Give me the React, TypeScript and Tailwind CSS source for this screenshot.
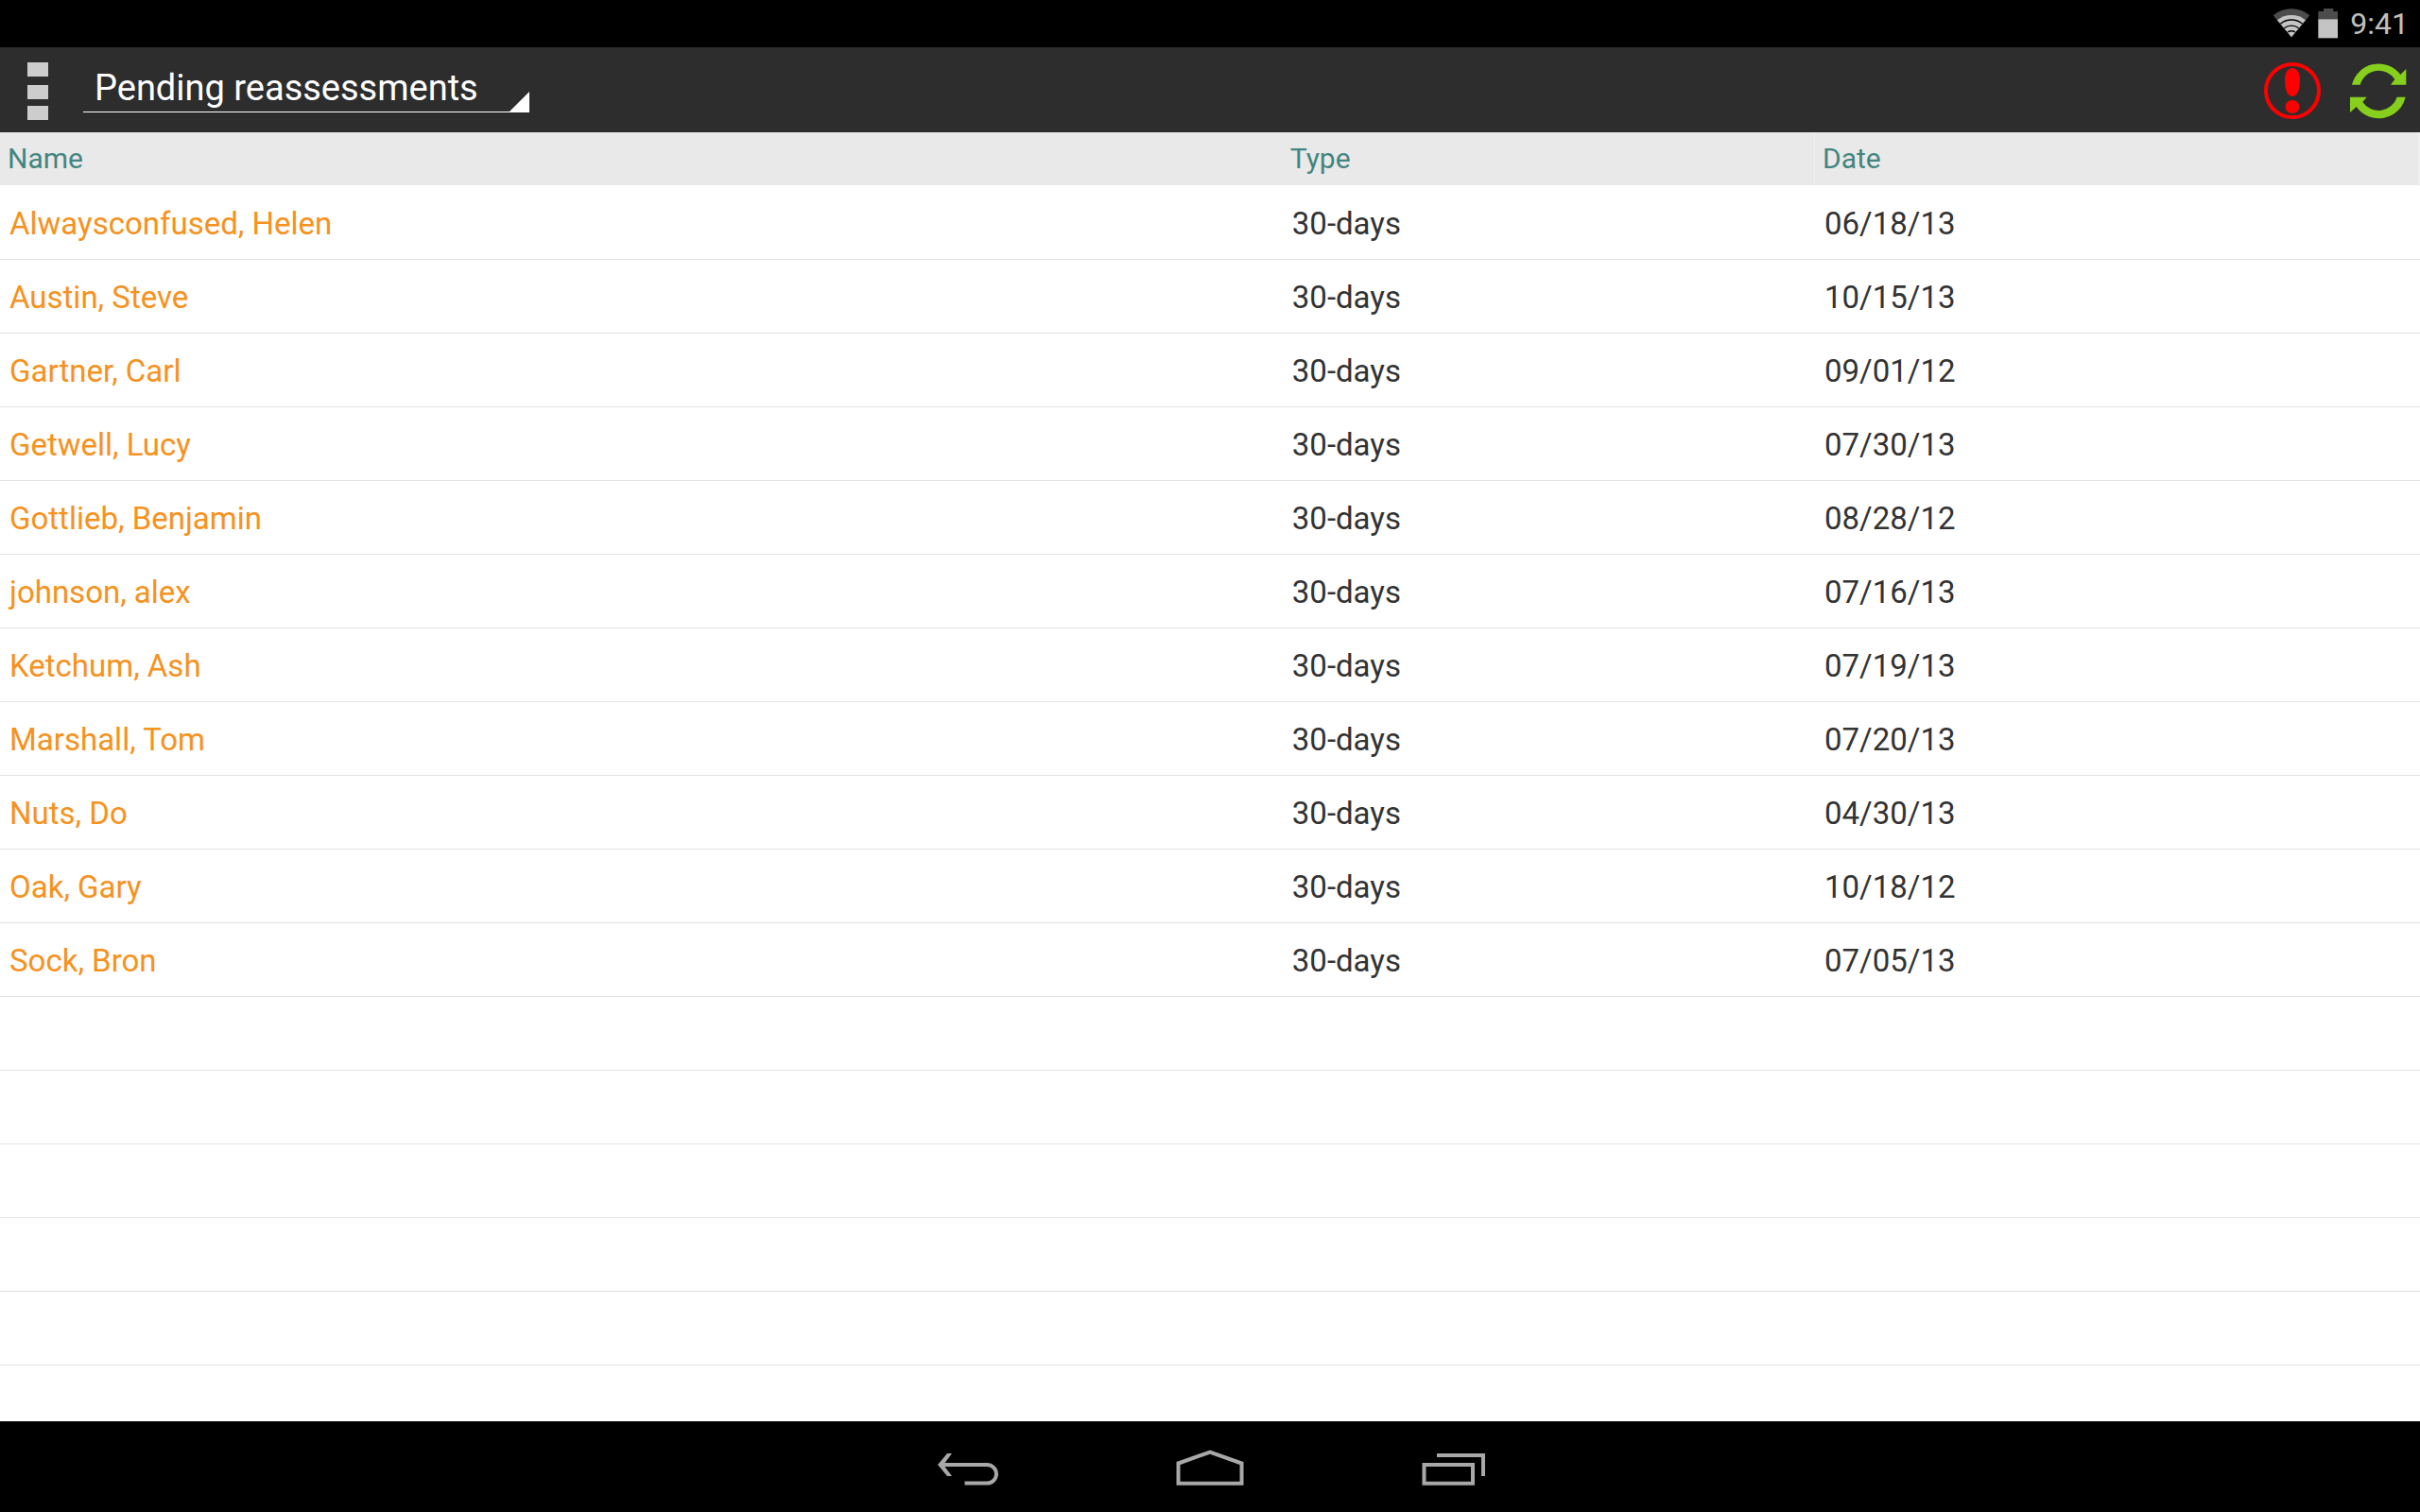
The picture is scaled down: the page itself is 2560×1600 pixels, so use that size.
import type { ReactNode } from 'react';

const reassessments = [
  { name: 'Alwaysconfused, Helen', type: '30-days', date: '06/18/13' },
  { name: 'Austin, Steve', type: '30-days', date: '10/15/13' },
  { name: 'Gartner, Carl', type: '30-days', date: '09/01/12' },
  { name: 'Getwell, Lucy', type: '30-days', date: '07/30/13' },
  { name: 'Gottlieb, Benjamin', type: '30-days', date: '08/28/12' },
  { name: 'johnson, alex', type: '30-days', date: '07/16/13' },
  { name: 'Ketchum, Ash', type: '30-days', date: '07/19/13' },
  { name: 'Marshall, Tom', type: '30-days', date: '07/20/13' },
  { name: 'Nuts, Do', type: '30-days', date: '04/30/13' },
  { name: 'Oak, Gary', type: '30-days', date: '10/18/12' },
  { name: 'Sock, Bron', type: '30-days', date: '07/05/13' },
];

// blank ruled rows that fill the rest of the list
const EMPTY_ROWS = 5;

export default function App() {
  return (
    <div className="flex h-screen flex-col overflow-hidden bg-white font-[Roboto,sans-serif]">
      <StatusBar />
      <ActionBar />
      <main className="min-h-0 flex-1 overflow-hidden">
        <ReassessmentTable />
      </main>
      <NavBar />
    </div>
  );
}

function StatusBar() {
  return (
    <div className="flex h-[50px] shrink-0 items-center justify-end bg-black pr-3 text-[#c0c0c0]">
      <WifiIcon />
      <BatteryIcon />
      <span className="text-[32px] leading-[50px]">9:41</span>
    </div>
  );
}

function ActionBar() {
  return (
    <header className="flex h-[90px] shrink-0 items-center bg-[#2d2d2d] pr-3">
      <button aria-label="Menu" className="flex h-full w-20 items-center justify-center pt-1">
        <svg width="22" height="62" viewBox="0 0 22 62" fill="#cdcdcd">
          <rect y="0" width="22" height="15" />
          <rect y="24" width="22" height="15" />
          <rect y="46" width="22" height="15" />
        </svg>
      </button>
      <div className="relative ml-2">
        <select
          aria-label="List"
          className="block h-[48px] w-[472px] appearance-none border-b border-white bg-transparent pb-1 pl-3 text-[38px] leading-[44px] text-white outline-none"
        >
          <option>Pending reassessments</option>
        </select>
        <svg className="pointer-events-none absolute right-0 bottom-0" width="22" height="22" viewBox="0 0 22 22" fill="#fff">
          <path d="M22 0V22H0Z" />
        </svg>
      </div>
      <div className="ml-auto flex items-center gap-7 pt-0.5">
        <button aria-label="Alerts">
          <AlertIcon />
        </button>
        <button aria-label="Refresh">
          <RefreshIcon />
        </button>
      </div>
    </header>
  );
}

function ReassessmentTable() {
  return (
    <table className="w-full table-fixed border-separate border-spacing-0 text-left">
      <thead>
        <tr className="h-[57px] bg-[#e9e9e9] text-[30px] text-[#43857f]">
          <th className="w-[53%] border-b border-white pb-0.5 pl-2 font-normal">Name</th>
          <th className="w-[22%] border-r border-b border-r-[#f0f0f0] border-b-white pb-0.5 pl-2 font-normal">Type</th>
          <th className="w-[25%] border-r-2 border-b border-r-[#f0f0f0] border-b-white pb-0.5 pl-2 font-normal">Date</th>
        </tr>
      </thead>
      <tbody className="text-[33px] text-[#333]">
        {reassessments.map((r) => (
          <tr key={r.name} className="h-[78px]">
            <td className="border-b border-[#e2e2e2] pt-0.5 pl-[10px]">
              <a href="#" className="text-[#f6921e]">{r.name}</a>
            </td>
            <td className="border-b border-[#e2e2e2] pt-0.5 pl-[10px]">{r.type}</td>
            <td className="border-b border-[#e2e2e2] pt-0.5 pl-[10px]">{r.date}</td>
          </tr>
        ))}
        {Array.from({ length: EMPTY_ROWS }).map((_, i) => (
          <tr key={i} className="h-[78px]">
            <td colSpan={3} className="border-b border-[#e2e2e2]" />
          </tr>
        ))}
      </tbody>
    </table>
  );
}

function NavBar() {
  return (
    <nav className="flex h-24 shrink-0 justify-center bg-black">
      <NavButton label="Back">
        <path d="M12 22H60A10 9.8 0 0 1 60 41.6H36.5" />
        <path d="M8 22L18 10H23L14 22L23 34H18Z" fill="#a8a8a8" stroke="none" />
      </NavButton>
      <NavButton label="Home">
        <path d="M6.5 20.5L40 8.5L73.5 20.5V41.7H6.5Z" />
      </NavButton>
      <NavButton label="Recent apps">
        <path d="M10.5 22H62V41.7H10.5Z" />
        <path d="M24 12H73V34" />
      </NavButton>
    </nav>
  );
}

function NavButton({ label, children }: { label: string; children: ReactNode }) {
  return (
    <button aria-label={label} className="flex w-64 items-center justify-center">
      <svg width="80" height="48" viewBox="0 0 80 48" fill="none" stroke="#a8a8a8" strokeWidth="4">
        {children}
      </svg>
    </button>
  );
}

function WifiIcon() {
  return (
    <svg className="mr-2" width="40" height="32" viewBox="43 26 120 96">
      <path d="M103 117L45 48A90 90 0 0 1 161 48Z" fill="#4c4c4c" />
      <path d="M103 117L58 63A71 71 0 0 1 148 63Z" fill="#c4c4c4" />
      <path d="M68 75A54 54 0 0 1 138 75M80 88A38 38 0 0 1 126 88M91 101A22 22 0 0 1 115 101" fill="none" stroke="#000" strokeWidth="4" />
    </svg>
  );
}

function BatteryIcon() {
  return (
    <svg className="mr-3" width="22" height="32" viewBox="188 25 66 96">
      <path d="M206 25H237V34H251V60H189V34H206Z" fill="#4c4c4c" />
      <path d="M189 59H251V119H189Z" fill="#c4c4c4" />
    </svg>
  );
}

function AlertIcon() {
  return (
    <svg width="62" height="62" viewBox="0 0 62 62">
      <circle cx="31" cy="31" r="28" fill="none" stroke="#f00" strokeWidth="4" />
      <path d="M31 7C36 7 39 12 39 19C39 28 37 37 31 37C25 37 23 28 23 19C23 12 26 7 31 7Z" fill="#f00" />
      <ellipse cx="31" cy="48" rx="7.5" ry="7" fill="#f00" />
    </svg>
  );
}

function RefreshIcon() {
  return (
    <svg width="64" height="62" viewBox="311 45 192 186" fill="#86cf1d">
      <path d="M323 119A87 87 0 0 1 477 87L495 69V119H446L459 102A61 61 0 0 0 349 119Z" />
      <path d="M493 158A87 87 0 0 1 337 189L317 207V158H370L357 174A61 61 0 0 0 466 158Z" />
    </svg>
  );
}
